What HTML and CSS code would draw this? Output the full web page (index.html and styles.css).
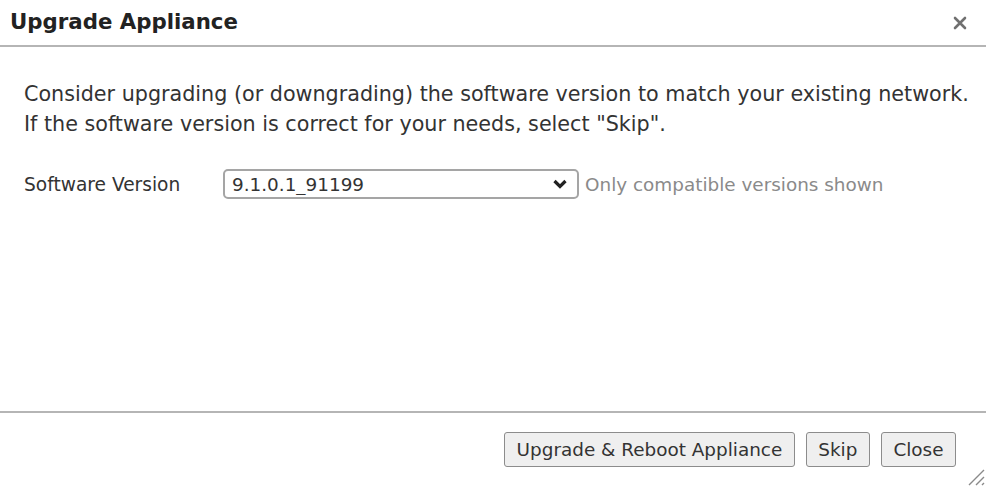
FILE: index.html
```html
<!DOCTYPE html>
<html lang="en">
<head>
  <meta charset="UTF-8" />
  <title>Upgrade Appliance</title>
  <link rel="stylesheet" href="styles.css">
</head>
<body>
  <div class="dialog">
    <div class="titlebar">
      <h1>Upgrade Appliance</h1>
      <button class="close-x" title="Close">
        <svg width="14" height="14" viewBox="0 0 14 14"><path d="M2 2 L12 12 M12 2 L2 12" stroke="#707070" stroke-width="2.6" stroke-linecap="round"/></svg>
      </button>
    </div>

    <div class="content">
      <p class="intro">
        Consider upgrading (or downgrading) the software version to match your existing network.<br/>
        If the software version is correct for your needs, select "Skip".
      </p>
      <div class="field">
        <label class="field-label" for="version">Software Version</label>
        <div class="select-wrap">
          <select id="version">
            <option>9.1.0.1_91199</option>
          </select>
          <svg class="chevron" width="14" height="10" viewBox="0 0 14 10"><path d="M1.5 2 L7 7.5 L12.5 2" fill="none" stroke="#222" stroke-width="3.2"/></svg>
        </div>
        <span class="hint">Only compatible versions shown</span>
      </div>
    </div>

    <div class="footer">
      <button class="btn">Upgrade &amp; Reboot Appliance</button>
      <button class="btn">Skip</button>
      <button class="btn">Close</button>
    </div>

    <svg class="grip" width="22" height="22" viewBox="0 0 22 22">
      <path d="M21 6 L6 21 M21 13 L13 21 M21 19 L19 21" stroke="#8a8a8a" stroke-width="1.4"/>
    </svg>
  </div>
</body>
</html>
```

FILE: styles.css
```css
* {
  box-sizing: border-box;
  margin: 0;
  padding: 0;
}
body {
  font-family: 'DejaVu Sans', sans-serif;
  background: #fff;
  color: #333;
}
.dialog {
  position: relative;
  width: 986px;
  height: 488px;
  display: flex;
  flex-direction: column;
}
.titlebar {
  height: 47px;
  padding: 0 10px;
  display: flex;
  justify-content: space-between;
  align-items: center;
  border-bottom: 2px solid #b5b5b5;
}
.titlebar h1 {
  font-size: 21.3px;
  font-weight: bold;
  color: #222;
  padding-bottom: 2px;
}
.close-x {
  background: none;
  border: none;
  width: 20px;
  height: 20px;
  margin-right: 6px;
  display: flex;
  align-items: center;
  justify-content: center;
  cursor: pointer;
}
.content {
  flex: 1;
  padding: 32px 12px 0 24px;
}
.intro {
  font-size: 20.7px;
  line-height: 30px;
  color: #333;
  white-space: nowrap;
}
.field {
  display: flex;
  align-items: center;
  margin-top: 30px;
  font-size: 18.6px;
}
.field-label {
  width: 199px;
}
.select-wrap {
  position: relative;
  width: 356px;
  height: 30px;
}
.select-wrap select {
  width: 100%;
  height: 100%;
  appearance: none;
  border: 2px solid #a5a5a5;
  border-radius: 5px;
  background: #fff;
  font-family: inherit;
  font-size: 18.4px;
  color: #333;
  padding: 0 7px;
}
.chevron {
  position: absolute;
  right: 12px;
  top: 10px;
  pointer-events: none;
}
.hint {
  margin-left: 6px;
  font-size: 18.4px;
  color: #8a8a8a;
}
.footer {
  height: 77px;
  border-top: 2px solid #b5b5b5;
  display: flex;
  justify-content: flex-end;
  align-items: flex-start;
  gap: 11px;
  padding: 19px 30px 0 0;
}
.btn {
  font-family: inherit;
  font-size: 18.4px;
  color: #333;
  background: #efefef;
  border: 1px solid #8c8c8c;
  border-radius: 3px;
  height: 35px;
  padding: 0 11.5px;
  cursor: pointer;
}
.grip {
  position: absolute;
  right: 1px;
  bottom: 2px;
}
```
